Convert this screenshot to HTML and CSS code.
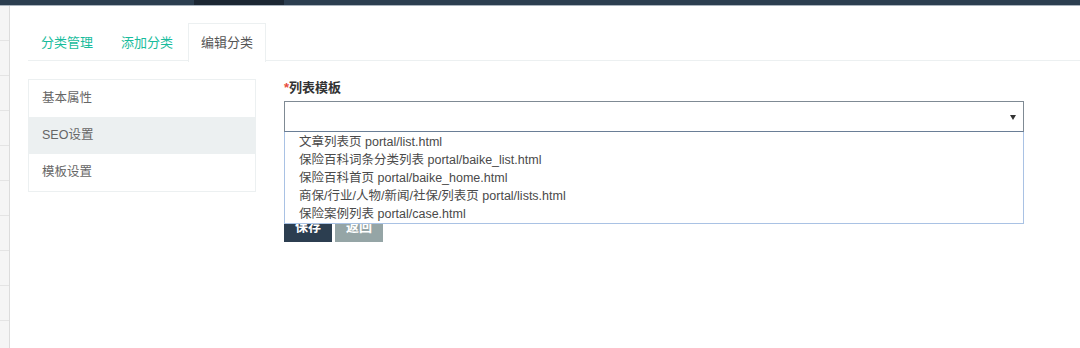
FILE: index.html
```html
<!DOCTYPE html>
<html lang="zh-CN">
<head>
<meta charset="utf-8">
<title>编辑分类</title>
<link rel="stylesheet" href="styles.css">
</head>
<body>
<div class="topbar"><div class="topbar-gap"></div><div class="topbar-dark"></div></div>
<div class="layout">
  <aside class="strip">
    <div class="strip-row"></div><div class="strip-row"></div><div class="strip-row"></div>
    <div class="strip-row"></div><div class="strip-row"></div><div class="strip-row"></div>
    <div class="strip-row"></div><div class="strip-row"></div><div class="strip-row"></div>
    <div class="strip-row last"></div>
  </aside>
  <main class="content">
    <ul class="tabs">
      <li class="tab"><a>分类管理</a></li>
      <li class="tab"><a>添加分类</a></li>
      <li class="tab active"><a>编辑分类</a></li>
    </ul>
    <div class="panel">
      <ul class="side-list">
        <li class="side-item">基本属性</li>
        <li class="side-item selected">SEO设置</li>
        <li class="side-item">模板设置</li>
      </ul>
      <form class="form">
        <label class="label"><span class="req">*</span>列表模板</label>
        <div class="select-wrap">
          <div class="select"><span class="arrow"></span></div>
          <ul class="dropdown">
            <li>文章列表页 portal/list.html</li>
            <li>保险百科词条分类列表 portal/baike_list.html</li>
            <li>保险百科首页 portal/baike_home.html</li>
            <li>商保/行业/人物/新闻/社保/列表页 portal/lists.html</li>
            <li>保险案例列表 portal/case.html</li>
          </ul>
        </div>
        <div class="buttons">
          <button type="button" class="btn btn-primary">保存</button>
          <button type="button" class="btn btn-default">返回</button>
        </div>
      </form>
    </div>
  </main>
</div>
</body>
</html>
```
FILE: styles.css
```css
* { box-sizing: border-box; }
html, body { margin: 0; padding: 0; background: #fff; }
body {
  font-family: "Liberation Sans", "Noto Sans CJK SC", sans-serif;
  font-size: 13px;
  color: #555;
  height: 348px;
  overflow: hidden;
}
ul { list-style: none; margin: 0; padding: 0; }

.topbar {
  display: flex;
  height: 6px;
  background: #2c3e50;
  border-bottom: 1px solid #aab4be;
}
.topbar-gap { width: 194px; }
.topbar-dark { width: 90px; background: #1c2733; }

.layout { display: flex; height: 342px; }

.strip {
  width: 10px;
  flex: none;
  background: #f5f5f5;
  border-right: 1px solid #dcdcdc;
}
.strip-row { height: 35px; border-bottom: 1px solid #e4e4e4; }
.strip-row.last { border-bottom: none; }

.content { flex: 1; padding: 17px 0 0 18px; }

.tabs {
  display: flex;
  border-bottom: 1px solid #ecf0f1;
  height: 38px;
}
.tab { margin-right: 2px; }
.tab a {
  display: block;
  padding: 10px 12px 9px;
  line-height: 18px;
  color: #18bc9c;
  border: 1px solid transparent;
  border-bottom: none;
}
.tab.active a {
  color: #555;
  background: #fff;
  border-color: #ecf0f1;
  height: 39px;
}

.panel { display: flex; margin-top: 18px; gap: 28px; }

.side-list {
  width: 228px;
  flex: none;
  border: 1px solid #ecf0f1;
  align-self: flex-start;
}
.side-item {
  height: 37px;
  line-height: 36px;
  padding-left: 13px;
  color: #666;
  font-size: 12.5px;
}
.side-item.selected { background: #ecf0f1; }

.form { width: 740px; display: flex; flex-direction: column; }
.label {
  font-weight: bold;
  color: #333;
  line-height: 18px;
  margin-top: 0;
}
.req { color: #e74c3c; }

.select-wrap { position: relative; margin-top: 4px; }
.select {
  height: 31px;
  border: 1px solid #7f8a94;
  border-bottom-color: #6a7e96;
  background: #fff;
  position: relative;
}
.arrow {
  position: absolute;
  right: 7px;
  top: 13px;
  width: 0; height: 0;
  border-left: 3.5px solid transparent;
  border-right: 3.5px solid transparent;
  border-top: 5px solid #333;
}
.dropdown {
  position: absolute;
  left: 0; right: 0;
  top: 31px;
  background: #fff;
  border: 1px solid #a9c2e4;
  border-top: none;
  padding: 1px 0 0;
  z-index: 2;
}
.dropdown li {
  height: 18px;
  line-height: 18px;
  padding-left: 14px;
  color: #4a4a4a;
  font-size: 12.5px;
  white-space: nowrap;
}

.buttons { display: flex; gap: 3px; margin-top: 78px; }
.btn {
  font-family: inherit;
  font-size: 13px;
  font-weight: bold;
  color: #fff;
  border: none;
  width: 48px;
  height: 32px;
  padding: 0 0 2px;
}
.btn-primary { background: #2c3e50; }
.btn-default { background: #95a5a6; }
```
